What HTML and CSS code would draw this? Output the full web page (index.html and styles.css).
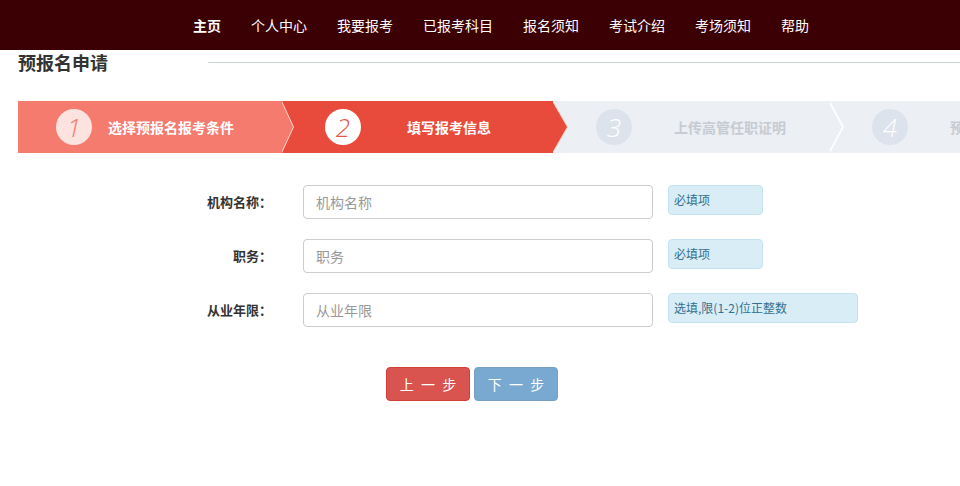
FILE: index.html
```html
<!DOCTYPE html>
<html lang="zh-CN">
<head>
    <meta charset="UTF-8">
    <title>预报名申请</title>
    <link rel="stylesheet" href="styles.css">
</head>
<body>
    <div class="nav">
        <a class="active" href="#">主页</a>
        <a href="#">个人中心</a>
        <a href="#">我要报考</a>
        <a href="#">已报考科目</a>
        <a href="#">报名须知</a>
        <a href="#">考试介绍</a>
        <a href="#">考场须知</a>
        <a href="#">帮助</a>
    </div>

    <div class="page-head">
        <h2>预报名申请</h2>
        <div class="head-line"></div>
    </div>

    <!-- steps -->
    <div class="steps">
        <div class="step done">
            <span class="num">1</span>
            <span class="step-text">选择预报名报考条件</span>
        </div>
        <div class="step current">
            <span class="num">2</span>
            <span class="step-text">填写报考信息</span>
        </div>
        <div class="step">
            <span class="num">3</span>
            <span class="step-text">上传高管任职证明</span>
        </div>
        <div class="step">
            <span class="num">4</span>
            <span class="step-text">预报名完成</span>
        </div>
    </div>

    <form class="apply-form">
        <div class="form-row">
            <label for="org">机构名称：</label>
            <input type="text" id="org" placeholder="机构名称">
            <span class="hint">必填项</span>
        </div>
        <div class="form-row">
            <label for="duty">职务：</label>
            <input type="text" id="duty" placeholder="职务">
            <span class="hint">必填项</span>
        </div>
        <div class="form-row">
            <label for="years">从业年限：</label>
            <input type="text" id="years" placeholder="从业年限">
            <span class="hint hint-wide">选填,限(1-2)位正整数</span>
        </div>

        <div class="form-buttons">
            <button type="button" class="btn btn-prev">上 一 步</button>
            <button type="button" class="btn btn-next" disabled>下 一 步</button>
        </div>
    </form>
</body>
</html>
```

FILE: styles.css
```css
body {
    margin: 0;
    padding: 0;
    background-color: #fff;
    font-family: "Noto Sans CJK SC", "Liberation Sans", sans-serif;
    color: #333;
    overflow: hidden;
}
.nav {
    height: 50px;
    background-color: #3a0003;
    display: flex;
    align-items: center;
    padding-left: 193px;
    gap: 30px;
}
.nav a {
    color: #fff;
    text-decoration: none;
    font-size: 14px;
    line-height: 20px;
}
.nav a.active {
    font-weight: bold;
}
.page-head {
    display: flex;
    align-items: center;
    height: 24px;
    padding-left: 18px;
}
.page-head h2 {
    margin: 0;
    font-size: 18px;
    line-height: 24px;
    font-weight: bold;
    color: #333;
}
.head-line {
    flex: 1;
    height: 1px;
    margin-left: 100px;
    background-color: #c9d6ce;
}

/* steps */
.steps {
    display: flex;
    margin: 27px 0 0 18px;
    height: 52px;
    background-color: #eceff4;
}
.step {
    position: relative;
    flex-shrink: 0;
    width: 276px;
    height: 52px;
    display: flex;
    align-items: center;
    box-sizing: border-box;
    padding-left: 43px;
    background-color: #eceff4;
}
.step::before,
.step::after {
    content: "";
    position: absolute;
    top: 0;
    border-top: 26px solid transparent;
    border-bottom: 26px solid transparent;
}
.step::before {
    right: -15px;
    border-left: 14px solid #fff;
    z-index: 2;
}
.step::after {
    right: -13px;
    border-left: 14px solid #eceff4;
    z-index: 3;
}
.step.done {
    width: 264px;
    padding-left: 38px;
    background-color: #f47b6e;
}
.step.done::before {
    border-left-color: #fbd8d2;
    right: -12px;
    border-left-width: 12px;
}
.step.done::after {
    right: -11px;
    border-left-width: 12px;
    border-left-color: #f47b6e;
}
.step.current {
    width: 271px;
    background-color: #e84b3c;
}
.step.current::before {
    right: -15px;
    border-left-width: 15px;
    border-left-color: #f8cfc8;
}
.step.current::after {
    right: -14px;
    border-left-width: 15px;
    border-left-color: #e84b3c;
}
.num {
    width: 36px;
    height: 36px;
    border-radius: 50%;
    background-color: #dde3ec;
    color: #fff;
    font-family: "Open Sans", "Liberation Sans", sans-serif;
    font-style: italic;
    font-weight: 300;
    font-size: 26px;
    line-height: 36px;
    text-align: center;
    flex-shrink: 0;
}
.step-text {
    margin-left: 42px;
    font-size: 14px;
    font-weight: bold;
    color: #c6cbd3;
    white-space: nowrap;
}
.step.done .num {
    background-color: #fce3df;
    color: #f07a6d;
}
.step.done .step-text {
    margin-left: 16px;
    color: #fff;
}
.step.current .num {
    background-color: #fff;
    color: #e0584b;
}
.step.current .step-text {
    margin-left: 46px;
    color: #fff;
}

/* form */
.apply-form {
    margin-top: 32px;
}
.form-row {
    display: flex;
    align-items: flex-start;
    margin-bottom: 20px;
}
.form-row label {
    width: 272px;
    text-align: right;
    font-size: 13px;
    font-weight: bold;
    line-height: 34px;
    color: #333;
}
.form-row input {
    width: 350px;
    height: 34px;
    box-sizing: border-box;
    margin: 0 0 0 31px;
    padding: 0 12px;
    border: 1px solid #ccc;
    border-radius: 4px;
    font-family: inherit;
    font-size: 14px;
    color: #555;
}
.form-row input::placeholder {
    color: #999;
}
.hint {
    width: 95px;
    height: 30px;
    box-sizing: border-box;
    margin-left: 15px;
    padding-left: 5px;
    background-color: #d9edf7;
    border: 1px solid #c4e3f0;
    border-radius: 4px;
    font-size: 12px;
    line-height: 27px;
    color: #31708f;
}
.hint-wide {
    width: 190px;
}
.form-buttons {
    display: flex;
    gap: 4px;
    padding-left: 386px;
    margin-top: 40px;
}
.btn {
    width: 84px;
    height: 34px;
    border: 1px solid transparent;
    border-radius: 4px;
    color: #fff;
    font-family: inherit;
    font-size: 14px;
    word-spacing: 4px;
    cursor: pointer;
}
.btn-prev {
    background-color: #d9534f;
    border-color: #d43f3a;
}
.btn-next {
    background-color: #337ab7;
    border-color: #2e6da4;
    opacity: 0.65;
    cursor: not-allowed;
}
```
